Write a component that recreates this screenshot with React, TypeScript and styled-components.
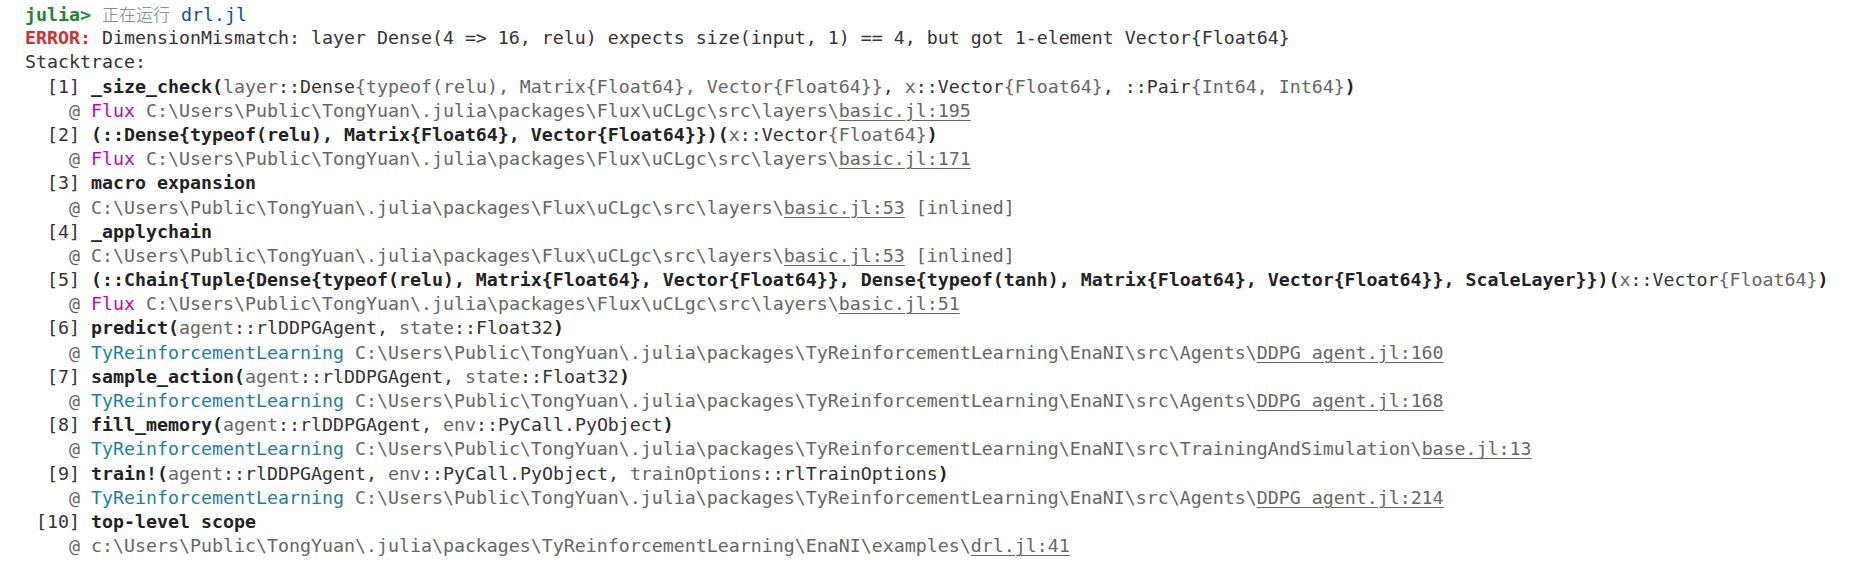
import React from "react";
import styled, { createGlobalStyle } from "styled-components";

const Global = createGlobalStyle`
  html, body { margin: 0; padding: 0; background: #ffffff; }
  body { width: 1855px; height: 577px; overflow: hidden; }
`;

const Terminal = styled.div`
  box-sizing: border-box;
  width: 1855px;
  height: 577px;
  padding: 2px 0 0 25px;
  background: #ffffff;
  color: #333333;
  font-family: "DejaVu Sans Mono", "Liberation Mono", monospace;
  font-size: 18.27px;
  line-height: 24.2px;
`;

const Line = styled.div`
  white-space: pre;
  height: 24.2px;
`;

const Prompt = styled.span`
  color: #1a8a2e;
  font-weight: bold;
`;

const Cjk = styled.span`
  font-family: "Noto Sans CJK SC", sans-serif;
  font-size: 17px;
  font-weight: 300;
  color: #6477ad;
`;

const Input = styled.span`
  color: #0451a5;
`;

const ErrorLabel = styled.span`
  color: #cd3131;
  font-weight: bold;
`;

const Strong = styled.span`
  font-weight: bold;
  color: #222222;
`;

const Dim = styled.span`
  color: #666666;
`;

const Mod = styled.span<{ $tone: string }>`
  color: ${(p) => p.$tone};
`;

const FileRef = styled.span`
  color: #666666;
  text-decoration: underline;
  text-decoration-thickness: 1px;
  text-underline-offset: 3px;
`;

type Arg = { name?: string; type: string; params?: string };

const MODULE_TONES: Record<string, string> = {
  Flux: "#bc05bc",
  TyReinforcementLearning: "#1a7ea3",
};

function Args({ args }: { args: Arg[] }) {
  return (
    <>
      <Strong>(</Strong>
      {args.map((a, i) => (
        <React.Fragment key={i}>
          {i > 0 && ", "}
          {a.name && <Dim>{a.name}</Dim>}
          {"::"}
          {a.type}
          {a.params && <Dim>{a.params}</Dim>}
        </React.Fragment>
      ))}
      <Strong>)</Strong>
    </>
  );
}

type FrameData = {
  idx: number;
  fn: string;
  args?: Arg[];
  module?: string;
  dir: string;
  file: string;
  suffix?: string;
};

function Frame({ f }: { f: FrameData }) {
  const label = f.idx < 10 ? `  [${f.idx}] ` : ` [${f.idx}] `;
  return (
    <>
      <Line>
        {label}
        <Strong>{f.fn}</Strong>
        {f.args && <Args args={f.args} />}
      </Line>
      <Line>
        <Dim>{"    @ "}</Dim>
        {f.module && (
          <>
            <Mod $tone={MODULE_TONES[f.module]}>{f.module}</Mod>{" "}
          </>
        )}
        <Dim>{f.dir}</Dim>
        <FileRef>{f.file}</FileRef>
        {f.suffix && <Dim>{f.suffix}</Dim>}
      </Line>
    </>
  );
}

const FLUX = "C:\\Users\\Public\\TongYuan\\.julia\\packages\\Flux\\uCLgc\\src\\layers\\";
const TYRL = "C:\\Users\\Public\\TongYuan\\.julia\\packages\\TyReinforcementLearning\\EnaNI\\src\\";

const agent: Arg = { name: "agent", type: "rlDDPGAgent" };
const env: Arg = { name: "env", type: "PyCall.PyObject" };
const state: Arg = { name: "state", type: "Float32" };
const xVec: Arg = { name: "x", type: "Vector", params: "{Float64}" };

const frames: FrameData[] = [
  {
    idx: 1,
    fn: "_size_check",
    args: [
      { name: "layer", type: "Dense", params: "{typeof(relu), Matrix{Float64}, Vector{Float64}}" },
      xVec,
      { type: "Pair", params: "{Int64, Int64}" },
    ],
    module: "Flux",
    dir: FLUX,
    file: "basic.jl:195",
  },
  {
    idx: 2,
    fn: "(::Dense{typeof(relu), Matrix{Float64}, Vector{Float64}})",
    args: [xVec],
    module: "Flux",
    dir: FLUX,
    file: "basic.jl:171",
  },
  { idx: 3, fn: "macro expansion", dir: FLUX, file: "basic.jl:53", suffix: " [inlined]" },
  { idx: 4, fn: "_applychain", dir: FLUX, file: "basic.jl:53", suffix: " [inlined]" },
  {
    idx: 5,
    fn: "(::Chain{Tuple{Dense{typeof(relu), Matrix{Float64}, Vector{Float64}}, Dense{typeof(tanh), Matrix{Float64}, Vector{Float64}}, ScaleLayer}})",
    args: [xVec],
    module: "Flux",
    dir: FLUX,
    file: "basic.jl:51",
  },
  {
    idx: 6,
    fn: "predict",
    args: [agent, state],
    module: "TyReinforcementLearning",
    dir: TYRL + "Agents\\",
    file: "DDPG_agent.jl:160",
  },
  {
    idx: 7,
    fn: "sample_action",
    args: [agent, state],
    module: "TyReinforcementLearning",
    dir: TYRL + "Agents\\",
    file: "DDPG_agent.jl:168",
  },
  {
    idx: 8,
    fn: "fill_memory",
    args: [agent, env],
    module: "TyReinforcementLearning",
    dir: TYRL + "TrainingAndSimulation\\",
    file: "base.jl:13",
  },
  {
    idx: 9,
    fn: "train!",
    args: [agent, env, { name: "trainOptions", type: "rlTrainOptions" }],
    module: "TyReinforcementLearning",
    dir: TYRL + "Agents\\",
    file: "DDPG_agent.jl:214",
  },
  {
    idx: 10,
    fn: "top-level scope",
    dir: "c:\\Users\\Public\\TongYuan\\.julia\\packages\\TyReinforcementLearning\\EnaNI\\examples\\",
    file: "drl.jl:41",
  },
];

export default function App() {
  return (
    <>
      <Global />
      <Terminal>
        <Line>
          <Prompt>julia&gt;</Prompt>{" "}
          <Cjk>正在运行</Cjk>{" "}
          <Input>drl.jl</Input>
        </Line>
        <Line>
          <ErrorLabel>ERROR:</ErrorLabel>
          {" DimensionMismatch: layer Dense(4 => 16, relu) expects size(input, 1) == 4, but got 1-element Vector{Float64}"}
        </Line>
        <Line>Stacktrace:</Line>
        {frames.map((f) => (
          <Frame key={f.idx} f={f} />
        ))}
      </Terminal>
    </>
  );
}
